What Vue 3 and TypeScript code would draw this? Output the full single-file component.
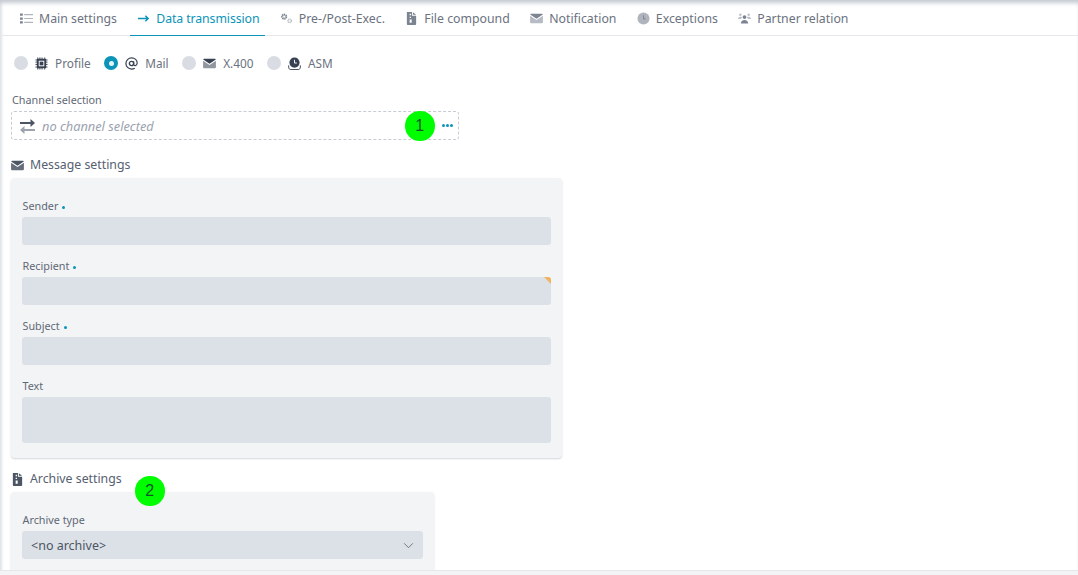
<script setup lang="ts">
const tabs = [
  { label: 'Main settings', icon: 'list', active: false },
  { label: 'Data transmission', icon: 'arrow', active: true },
  { label: 'Pre-/Post-Exec.', icon: 'gears', active: false },
  { label: 'File compound', icon: 'zip', active: false },
  { label: 'Notification', icon: 'mail', active: false },
  { label: 'Exceptions', icon: 'clock', active: false },
  { label: 'Partner relation', icon: 'people', active: false },
]
const radios = [
  { label: 'Profile', icon: 'chip', on: false },
  { label: 'Mail', icon: 'at', on: true },
  { label: 'X.400', icon: 'mail', on: false },
  { label: 'ASM', icon: 'asm', on: false },
]
const fields = [
  { label: 'Sender', req: true, tall: false, flag: false },
  { label: 'Recipient', req: true, tall: false, flag: true },
  { label: 'Subject', req: true, tall: false, flag: false },
  { label: 'Text', req: false, tall: true, flag: false },
]
</script>

<template>
  <div class="page">
    <svg width="0" height="0" class="defs">
      <defs>
        <symbol id="list" viewBox="0 0 14 14">
          <path fill="currentColor" d="M0 1.500h3v2.500H0zM0 5.800h3v2.500H0zM0 10h3v2.500H0z" />
          <path fill="currentColor" opacity=".6" d="M4.500 2.200H14v1.200H4.500zM4.500 6.400H14v1.200H4.500zM4.500 10.600H14v1.200H4.500z" />
        </symbol>
        <symbol id="arrow" viewBox="0 0 14 14">
          <path fill="none" stroke="currentColor" stroke-width="1.600" d="M1 7h11M9 4l3 3-3 3" />
        </symbol>
        <symbol id="gears" viewBox="0 0 14 14">
          <circle cx="4.500" cy="5" r="2.200" fill="none" stroke="currentColor" stroke-width="2.200" stroke-dasharray="1.300 .5" />
          <circle cx="10.500" cy="9.500" r="1.800" fill="none" stroke="currentColor" stroke-width="1.600" opacity=".5" stroke-dasharray="1.100 .4" />
        </symbol>
        <symbol id="zip" viewBox="0 0 14 14">
          <path fill="currentColor" fill-rule="evenodd" d="M2 0h5.500v4H12v9a1 1 0 0 1-1 1H3a1 1 0 0 1-1-1zM8.500 0.200 12 3H8.500zM5 2v1.500h1.500V2zM5 5v1.500h1.500V5zM5 8v3.500h2.200V8z" />
        </symbol>
        <symbol id="mail" viewBox="0 0 14 14">
          <path fill="currentColor" d="M1.200 2h11.600c.5 0 .9.300 1 .7L7 7.200.2 2.700c.1-.4.500-.7 1-.7z" />
          <path fill="currentColor" opacity=".55" d="M.1 4.100 7 8.700l6.900-4.600V11c0 .6-.5 1-1 1H1.100c-.6 0-1-.4-1-1z" />
        </symbol>
        <symbol id="mail-solid" viewBox="0 0 14 14">
          <path fill="currentColor" d="M1.200 2h11.600c.5 0 .9.300 1 .7L7 7.200.2 2.700c.1-.4.500-.7 1-.7z" />
          <path fill="currentColor" opacity=".85" d="M.1 4.100 7 8.700l6.900-4.600V11c0 .6-.5 1-1 1H1.100c-.6 0-1-.4-1-1z" />
        </symbol>
        <symbol id="clock" viewBox="0 0 14 14">
          <circle cx="7" cy="7" r="6.500" fill="currentColor" opacity=".6" />
          <path fill="none" stroke="currentColor" stroke-width="1" d="M7 3.500v4h2.500" />
        </symbol>
        <symbol id="people" viewBox="0 0 14 14">
          <circle cx="7" cy="5.500" r="2" fill="currentColor" />
          <path fill="currentColor" d="M3 12.500c0-2.400 1.800-4 4-4s4 1.600 4 4z" />
          <circle cx="2.500" cy="3" r="1.300" fill="currentColor" opacity=".5" />
          <circle cx="11.500" cy="3" r="1.300" fill="currentColor" opacity=".5" />
          <path fill="currentColor" opacity=".5" d="M0 7.500c0-1.500.9-2.500 2.500-2.500s1.800.5 2 1L3 7.500zM14 7.500c0-1.500-.9-2.500-2.500-2.500s-1.800.5-2 1L11 7.500z" />
        </symbol>
        <symbol id="chip" viewBox="0 0 14 14">
          <path fill="none" stroke="currentColor" stroke-width="1" d="M3 .5v13M5.300 .5v13M7.600 .5v13M10.500 .5v13M.5 3.200h13M.5 5.500h13M.5 8h13M.5 10.800h13" />
          <rect x="2" y="2" width="10" height="10" rx="1" fill="currentColor" />
          <rect x="4" y="4" width="6" height="6" fill="#fff" />
          <rect x="5" y="5" width="4" height="4" fill="currentColor" />
        </symbol>
        <symbol id="at" viewBox="0 0 14 14">
          <circle cx="7" cy="7" r="2.300" fill="none" stroke="currentColor" stroke-width="1.500" />
          <path fill="none" stroke="currentColor" stroke-width="1.300" d="M9.300 4.500v3.300c0 2 3.500 2 3.800-.8C13.400 3.200 10.500 1 7 1a6 6 0 0 0 0 12c1.400 0 2.500-.3 3.500-1" />
        </symbol>
        <symbol id="asm" viewBox="0 0 14 14">
          <circle cx="7" cy="6" r="5.500" fill="currentColor" />
          <path fill="none" stroke="#fff" stroke-width="1" d="M7 3v3.500h2.500" />
          <path fill="none" stroke="currentColor" stroke-width="1" d="M.7 9v2c0 1.500 1 2.500 2.300 2.500h8c1.300 0 2.300-1 2.300-2.500V9" />
        </symbol>
        <symbol id="swap" viewBox="0 0 15 15">
          <path fill="#4b5563" d="M0 3h10.500V0L15 4l-4.500 4V5H0z" />
          <path fill="#9ca3af" d="M15 10H4.500V7L0 11l4.500 4v-3H15z" />
        </symbol>
      </defs>
    </svg>

    <nav class="tabs">
      <a v-for="t in tabs" :key="t.label" class="tab" :class="{ active: t.active }">
        <svg class="tab-icon"><use :href="'#' + t.icon" /></svg>
        <span>{{ t.label }}</span>
      </a>
    </nav>

    <main class="content">
      <div class="radios">
        <label v-for="r in radios" :key="r.label" class="radio">
          <span class="dot" :class="{ on: r.on }"></span>
          <svg class="radio-icon"><use :href="'#' + r.icon" /></svg>
          <span>{{ r.label }}</span>
        </label>
      </div>

      <div class="label channel-label">Channel selection</div>
      <div class="channel">
        <svg class="swap"><use href="#swap" /></svg>
        <em>no channel selected</em>
        <span class="dots"><i></i><i></i><i></i></span>
        <span class="marker m1">1</span>
      </div>

      <h3 class="section first">
        <svg class="sec-icon"><use href="#mail-solid" /></svg>
        <span>Message settings</span>
      </h3>
      <section class="card message">
        <div v-for="f in fields" :key="f.label" class="field">
          <div class="label">{{ f.label }}<b v-if="f.req" class="req"></b></div>
          <div class="input" :class="{ tall: f.tall, flag: f.flag }"></div>
        </div>
      </section>

      <h3 class="section second">
        <svg class="sec-icon"><use href="#zip" /></svg>
        <span>Archive settings</span>
        <span class="marker m2">2</span>
      </h3>
      <section class="card archive">
        <div class="field">
          <div class="label">Archive type</div>
          <div class="input select">
            <span>&lt;no archive&gt;</span>
            <svg class="chev" viewBox="0 0 12 8"><path fill="none" stroke="currentColor" stroke-width="1.100" d="M1 1.500l5 5 5-5" /></svg>
          </div>
        </div>
      </section>
    </main>
    <div class="footer"></div>
  </div>
</template>

<style>
html, body { margin: 0; padding: 0; background: #fff; overflow: hidden; }
</style>

<style scoped>
.page {
  position: relative;
  width: 1078px;
  height: 575px;
  overflow: hidden;
  background: #fff;
  font-family: "Noto Sans", "Open Sans", sans-serif;
  color: #4b5563;
  box-shadow: inset 0 5px 4px -2px #c4cad2, inset 4px 0 3px -2px #e3e6ea;
}
.defs { position: absolute; }
.tabs {
  display: flex;
  box-sizing: border-box;
  height: 36px;
  padding: 1px 0 0 14px;
  border-bottom: 1px solid #e5e7eb;
}
.tab {
  display: flex;
  align-items: center;
  gap: 6px;
  padding: 0 6px;
  margin-right: 8.400px;
  height: 34px;
  font-size: 12.300px;
  color: #6b7280;
  white-space: nowrap;
}
.tab.active {
  margin-left: -1px;
  padding-left: 7px;
  color: #0b94b8;
  letter-spacing: -0.1px;
  border-bottom: 1px solid #0b94b8;
}
.tab-icon { width: 13px; height: 13px; color: #7c8491; }
.active .tab-icon { color: #0b94b8; }
.content { padding: 0 12px; }
.radios {
  display: flex;
  align-items: center;
  height: 20px;
  margin-top: 17px;
  padding-left: 2px;
  gap: 13.500px;
}
.radio {
  display: flex;
  align-items: center;
  font-size: 11.800px;
  color: #6b7280;
}
.dot {
  width: 14px;
  height: 14px;
  border-radius: 50%;
  background: #d9dce3;
  margin-right: 7px;
  position: relative;
}
.dot.on { background: #0b94b8; }
.dot.on::after {
  content: "";
  position: absolute;
  left: 4.500px;
  top: 4.500px;
  width: 5px;
  height: 5px;
  border-radius: 50%;
  background: #e6f4f8;
}
.radio-icon { width: 13px; height: 13px; margin-right: 7px; color: #374151; }
.label {
  font-size: 10.800px;
  line-height: 14px;
  color: #5f6875;
}
.card .label { padding-left: 0.500px; }
.channel-label { margin-top: 20px; }
.channel {
  position: relative;
  display: flex;
  align-items: center;
  box-sizing: border-box;
  width: 448px;
  height: 29px;
  margin: 4px 0 0 -1px;
  padding: 0 8px;
  border: 1px dashed #c7ccd4;
  border-radius: 3px;
}
.swap { width: 15px; height: 15px; margin-top: 1px; flex: none; }
.channel em { margin-left: 7px; font-size: 12.800px; color: #9ca3af; }
.dots { margin-left: auto; margin-right: -3px; display: flex; gap: 1px; }
.dots i { width: 3px; height: 3px; border-radius: 50%; background: #0b94b8; }
.marker {
  position: absolute;
  width: 29.500px;
  height: 29.500px;
  border-radius: 50%;
  background: #00fe00;
  color: #14532d;
  font-family: "Liberation Sans", sans-serif;
  font-size: 16px;
  font-weight: 400;
  line-height: 29.500px;
  text-align: center;
}
.m1 { left: 393px; top: -1px; }
.m2 { left: 124px; top: 6px; }
.section {
  position: relative;
  display: flex;
  align-items: center;
  gap: 6px;
  margin: 0;
  height: 18px;
  font-size: 12.300px;
  font-weight: 400;
  line-height: 18px;
  color: #566070;
}
.section.first { margin: 16px 0 0 -1px; }
.section.second { margin: 12px 0 0 -1px; }
.sec-icon { width: 13px; height: 13px; color: #4b5563; }
.card {
  box-sizing: border-box;
  margin-left: -1px;
  padding: 0 11px;
  background: #f3f4f6;
  border-radius: 4px;
  box-shadow: 0 1px 2px #d1d5db;
}
.message { width: 551px; height: 280px; margin-top: 4px; padding-top: 21px; }
.archive { width: 423px; height: 110px; margin-top: 4px; padding-top: 21px; }
.field { margin-bottom: 14px; }
.message .field .label { height: 14px; margin-bottom: 4px; }
.archive .label { margin-bottom: 4px; }
.input {
  position: relative;
  height: 28px;
  border-radius: 3px;
  background: #dce1e7;
  overflow: hidden;
}
.input.tall { height: 46px; }
.input.flag::after {
  content: "";
  position: absolute;
  right: 0;
  top: 0;
  border-top: 7px solid #f0b45f;
  border-left: 7px solid transparent;
}
.req {
  display: inline-block;
  width: 3px;
  height: 3px;
  border-radius: 50%;
  background: #0b94b8;
  margin-left: 4px;
  vertical-align: middle;
}
.select {
  display: flex;
  align-items: center;
  justify-content: space-between;
  padding: 0 9px;
  font-size: 12.500px;
  color: #4b5563;
}
.chev { width: 11px; height: 7px; color: #6b7280; }
.footer {
  position: absolute;
  left: 0;
  right: 0;
  bottom: 0;
  height: 4px;
  background: #f3f4f6;
  border-top: 1px solid #e5e7eb;
}
</style>
